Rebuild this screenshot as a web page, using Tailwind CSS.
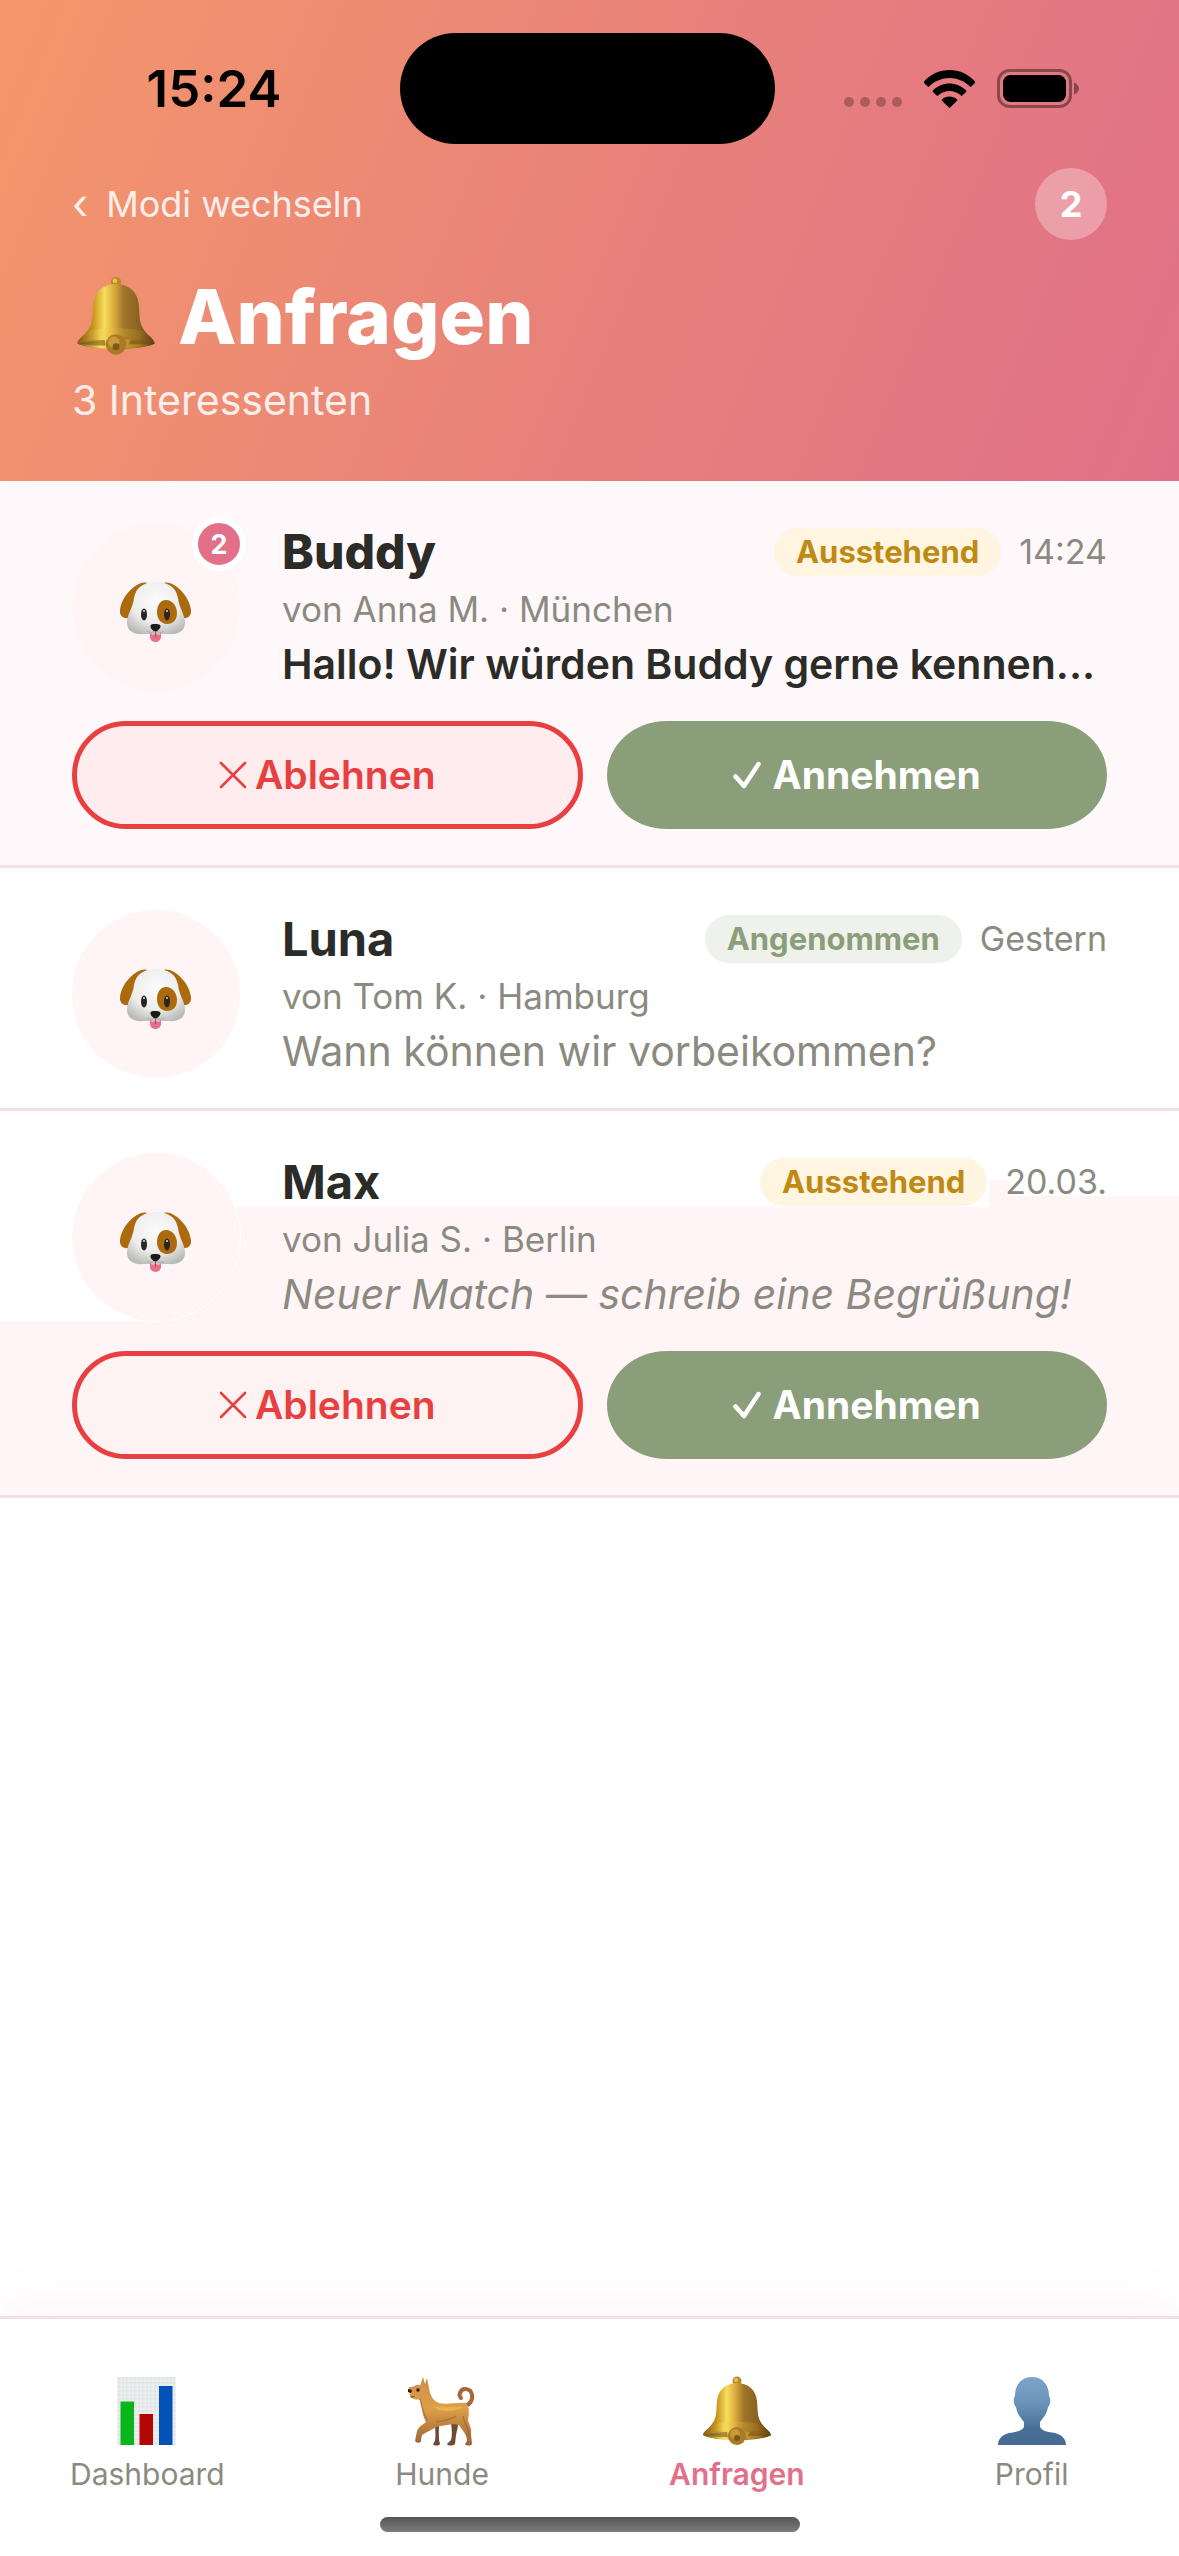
<!DOCTYPE html>
<html lang="de">
<head>
    <meta charset="UTF-8">
    <meta name="viewport" content="width=device-width, initial-scale=1.0">
    <title>Anfragen</title>
    <script src="https://cdn.jsdelivr.net/npm/@tailwindcss/browser@4"></script>
</head>
<body class="flex min-h-screen flex-col bg-white font-['Inter','Liberation_Sans',sans-serif] text-[#2b2b28]">

<!-- Symbole -->
<svg class="absolute size-0" aria-hidden="true">
    <defs>
        <linearGradient id="gold" x1="0" x2="1" y1="0" y2="0">
            <stop offset="0" stop-color="#8a5c12"/>
            <stop offset=".2" stop-color="#c8931c"/>
            <stop offset=".35" stop-color="#f7de5c"/>
            <stop offset=".48" stop-color="#d9a83a"/>
            <stop offset=".6" stop-color="#a0752c"/>
            <stop offset=".78" stop-color="#8b6420"/>
            <stop offset="1" stop-color="#6b4a14"/>
        </linearGradient>
        <linearGradient id="rim" x1="0" x2="1" y1="0" y2="0">
            <stop offset="0" stop-color="#7a5210"/>
            <stop offset=".3" stop-color="#f9e060"/>
            <stop offset=".5" stop-color="#dcab35"/>
            <stop offset=".8" stop-color="#a87a22"/>
            <stop offset="1" stop-color="#4f360e"/>
        </linearGradient>
        <radialGradient id="fur" cx=".5" cy=".35" r=".7">
            <stop offset="0" stop-color="#fbfbfb"/>
            <stop offset=".6" stop-color="#ededed"/>
            <stop offset="1" stop-color="#b9bab6"/>
        </radialGradient>
        <linearGradient id="coat" x1="0" x2="0" y1="0" y2="1">
            <stop offset="0" stop-color="#cd8c4c"/>
            <stop offset=".45" stop-color="#dda048"/>
            <stop offset="1" stop-color="#9c6236"/>
        </linearGradient>
        <linearGradient id="person" x1="0" x2="0" y1="0" y2="1">
            <stop offset="0" stop-color="#7ea5c8"/>
            <stop offset=".4" stop-color="#6a92b8"/>
            <stop offset=".75" stop-color="#4a7098"/>
            <stop offset="1" stop-color="#466a90"/>
        </linearGradient>
    </defs>

    <symbol id="bell" viewBox="0 0 72 72">
        <circle cx="36" cy="6" r="4.5" fill="#b98a25"/>
        <circle cx="35" cy="5" r="2" fill="#e8c64a"/>
        <path d="M36 8c10 0 19 6 20 18 1 11 0 16 5 23 4 5 9 8 9 11-3 3-19 5-34 5S5 63 2 60c0-3 5-6 9-11 5-7 4-12 5-23C17 14 26 8 36 8z" fill="url(#gold)"/>
        <path d="M13 49c12-3 34-3 46 0 4 4 8 6 10 9-14-3-52-3-66 0 2-3 6-5 10-9z" fill="url(#rim)" opacity=".5"/>
        <path d="M2 60c14-5 54-5 68 0-10 6-58 6-68 0z" fill="url(#rim)"/>
        <path d="M4 60c6-2 14-3 22-3l1 5c-9 0-17 0-23-2zM68 60c-6-2-12-3-19-3l-2 4c8 0 15 0 21-1z" fill="#6d4a10" opacity=".55"/>
        <circle cx="36" cy="61" r="9" fill="#a97b28"/>
        <circle cx="34" cy="59" r="5" fill="#c9993a"/>
        <circle cx="36" cy="63" r="3" fill="#7d5818"/>
    </symbol>

    <symbol id="dog-face" viewBox="0 -10 72 72">
        <path d="M27 2C19-1 2 13 0 29c-1 9 8 10 13 6 5-8 5-22 14-33zM44 2c8-3 25 11 27 27 1 9-8 10-13 6-5-8-5-22-14-33z" fill="#ad6a0d"/>
        <path d="M12 32c2-7 2-13 6-21M59 32c-2-7-2-13-6-21" fill="none" stroke="#7f4b08" stroke-width="2" opacity=".5"/>
        <path d="M36 1c12 0 20 5 22 16 1 10 7 16 7 25 0 8-7 12-17 11H24C14 54 7 50 7 42c0-9 6-15 7-25C16 6 24 1 36 1z" fill="url(#fur)"/>
        <path d="M46 19c7 0 11 7 11 13 0 7-4 11-10 11s-10-5-10-12c0-6 3-12 9-12z" fill="#ad6a0d"/>
        <ellipse cx="24" cy="33.500" rx="3" ry="6" fill="#2a2522"/>
        <ellipse cx="47" cy="33.500" rx="3" ry="6" fill="#2a2522"/>
        <circle cx="24" cy="30" r="1" fill="#ddd"/>
        <circle cx="47" cy="30" r="1" fill="#ddd"/>
        <path d="M30 52c2 2 4 2 5.500 0 2 2 4 2 5.500 0v4c0 3-3 5-5.500 5s-5.500-2-5.500-5z" fill="#e6708a"/>
        <path d="M27 50c3 2 6 2 8.500-1 3 3 6 3 8.500 1" fill="none" stroke="#a8a8a4"/>
        <path d="M35.500 43c4 0 5 1 5 2.500s-3 5-5 5-5-3-5-5 1-2.500 5-2.500z" fill="#1d1a19"/>
        <path d="M35.500 50v6" stroke="#b04a62"/>
    </symbol>

    <symbol id="chart" viewBox="0 0 72 72">
        <path d="M6.500 2h58v68h-58z" fill="#dfe4e5"/>
        <path d="M10 2v68M14 2v68M18 2v68M22 2v68M26 2v68M30 2v68M34 2v68M38 2v68M42 2v68M46 2v68M50 2v68M54 2v68M58 2v68M62 2v68M7 6h57M7 10h57M7 14h57M7 18h57M7 22h57M7 26h57M7 30h57M7 34h57M7 38h57M7 42h57M7 46h57M7 50h57M7 54h57M7 58h57M7 62h57M7 66h57" stroke="#eff2f2"/>
        <path d="M9.500 26.500h13.500V70H9.500z" fill="#08b61c"/>
        <path d="M28.500 39H42v31H28.500z" fill="#b50606"/>
        <path d="M48 11h13.500v59H48z" fill="#0352b8"/>
    </symbol>

    <symbol id="dog" viewBox="0 0 72 72">
        <path d="M29 46l5 1c-2 6-1 12-1 18l1 4c-1 2-6 2-7 0l2-3c1-6 0-12 0-20zM45 44l8 1c-1 7-2 10-3 15l-1 9c-2 2-7 2-8 0l4-4c2-7 0-13 0-21z" fill="#6f4a34"/>
        <path d="M58 31c6-1 9-6 8-11-1-7-10-8-12-2-1 2 0 4 1 5" fill="none" stroke="#a9663c" stroke-width="4" stroke-linecap="round"/>
        <path d="M14 11l3-9 2 7 2-6 2 10c1 7 4 13 10 15 8 2 18-1 27 0 4 4 3 12 2 17 1 5 4 8 3 14l1 10c-1 2-6 2-7 0l2-3c0-7-5-11-8-16-7-2-13 1-20 1-5 2-12 6-17 9l-1 5c1 3-4 4-6 1l2-10c2-5 6-6 9-9-4-7-4-15-6-22-2-1-4 0-6-1-3-1-5-3-4-5l-2-3 1-4c4 1 7-3 11-2z" fill="url(#coat)"/>
        <path d="M27 31c8 3 22 0 30 1-4 4-24 7-30-1z" fill="#efbb52" opacity=".7"/>
        <path d="M14 24c2 8 3 14 7 21M30 47c8-1 14-2 20-6M57 41c1 8 6 12 6 20" fill="none" stroke="#8d5632" stroke-width="1.500" opacity=".5"/>
        <circle cx="12" cy="15" r="1.700" fill="#2b1b14"/>
        <path d="M2 14l4 1-1 3-3-1zM4 22c2 1 4 0 5-1" fill="#2b1b14"/>
    </symbol>

    <symbol id="profile" viewBox="0 0 72 72">
        <path d="M36 2c11 0 17 8 17 19l1 2c1 5-1 8-2 9-1 7-5 11-8 15v5c2 4 8 5 15 6 8 2 11 7 11 12H2c0-5 3-10 11-12 7-1 13-2 15-6v-5c-3-4-7-8-8-15-1-1-3-4-2-9l1-2C19 10 25 2 36 2z" fill="url(#person)"/>
    </symbol>

    <symbol id="cross" viewBox="0 0 28 28">
        <path d="M2 2l24 24M26 2L2 26" fill="none" stroke="currentColor" stroke-width="2.600" stroke-linecap="round"/>
    </symbol>

    <symbol id="check" viewBox="0 0 28 28">
        <path d="M2.500 15.500l8.500 9.500L25.500 3" fill="none" stroke="currentColor" stroke-width="4.500" stroke-linecap="round" stroke-linejoin="round"/>
    </symbol>
</svg>

<!-- Kopfbereich -->
<header class="bg-[linear-gradient(112deg,#f4976b_0%,#e8827a_50%,#e07088_100%)] pt-[33px] pb-[54px] text-white">
    <div class="flex items-center">
        <div class="flex flex-1 justify-center pl-7 text-[51px] leading-[60px] font-semibold text-black">15:24</div>
        <div class="h-[111px] w-[375px] rounded-full bg-black"></div>
        <div class="flex flex-1 items-center justify-center gap-[22px] pr-8 text-black">
            <svg class="h-[38px] w-[58px]" viewBox="0 0 58 38" aria-hidden="true">
                <g fill="currentColor" opacity=".25">
                    <circle cx="5" cy="32" r="5"/>
                    <circle cx="21" cy="32" r="5"/>
                    <circle cx="37" cy="32" r="5"/>
                    <circle cx="53" cy="32" r="5"/>
                </g>
            </svg>
            <svg class="h-[38px] w-[51px]" viewBox="0 0 51 38" aria-hidden="true">
                <path d="M0 11.500C14-3.800 37-3.800 51 11.500c.4.500.4 1 0 1.400l-3.700 3.700c-.4.400-1 .4-1.400 0C34.500 5.200 16.500 5.200 5.100 16.600c-.4.400-1 .4-1.400 0L0 12.900c-.3-.4-.3-1 0-1.400z"/>
                <path d="M8.900 20.500c9.300-9.300 23.900-9.300 33.200 0 .4.400.4 1 0 1.400l-3.800 3.700c-.4.400-1 .4-1.400 0-6.400-6-16.400-6-22.800 0-.4.400-1 .4-1.400 0l-3.800-3.700c-.4-.4-.4-1 0-1.400z"/>
                <path d="M18 29.400c4.300-3.800 10.700-3.800 15 0 .5.400.5 1 .1 1.400l-6.900 6.700c-.4.400-1 .4-1.400 0l-6.900-6.700c-.4-.4-.4-1 .1-1.400z"/>
            </svg>
            <svg class="h-[39px] w-[82px]" viewBox="0 0 82 39" aria-hidden="true">
                <rect x="1.500" y="1.500" width="72" height="36" rx="11" fill="none" stroke="currentColor" stroke-width="3" opacity=".4"/>
                <path d="M77 13.500c3 1 5 3.500 5 6s-2 5-5 6z" opacity=".4"/>
                <rect x="6" y="6" width="63" height="27" rx="7.500"/>
            </svg>
        </div>
    </div>

    <div class="mt-6 flex items-center justify-between px-[72px]">
        <a href="#" class="flex items-center gap-[18px] text-[36px] leading-[48px] text-white/85">
            <span class="text-[42px]">‹</span>
            <span>Modi wechseln</span>
        </a>
        <span class="flex size-[72px] items-center justify-center rounded-full bg-white/30 text-[36px] leading-[48px] font-bold">2</span>
    </div>

    <div class="mt-7 px-[72px]">
        <h1 class="flex items-center gap-[21px] pl-[3px] text-[76px] leading-[96px] font-extrabold">
            <svg class="size-[82px]" aria-hidden="true"><use href="#bell"/></svg>
            Anfragen
        </h1>
        <p class="mt-[9px] text-[41px] leading-[54px] text-white/85">3 Interessenten</p>
    </div>
</header>

<main class="flex-1">
    <ul>
        <li class="border-b-3 border-[#f2e0e6] bg-[#fff8fa] px-[72px] pt-[42px] pb-9">
            <div class="flex gap-[42px]">
                <div class="relative flex size-[168px] shrink-0 items-center justify-center rounded-full bg-[#fff5f6]">
                    <svg class="size-[72px]" aria-hidden="true"><use href="#dog-face"/></svg>
                    <span class="absolute -top-1.5 -right-1.5 flex size-[54px] items-center justify-center rounded-full border-6 border-white bg-[#e27088] text-[27px] leading-none font-bold text-white">2</span>
                </div>
                <div class="min-w-0 flex-1">
                    <div class="flex h-[58px] items-center justify-between">
                        <h2 class="text-[48px] leading-[58px] font-extrabold">Buddy</h2>
                        <div class="flex items-center gap-[18px]">
                            <span class="rounded-full bg-[#fff5e0] px-[22px] text-[31px] leading-[48px] font-bold text-[#bf8a14]">Ausstehend</span>
                            <time class="text-[34px] leading-[48px] text-[#8a8a80]">14:24</time>
                        </div>
                    </div>
                    <p class="text-[35px] leading-[56px] text-[#8a8a80]">von Anna M. · München</p>
                    <p class="text-[41px] leading-[54px] font-semibold whitespace-nowrap">Hallo! Wir würden Buddy gerne kennen...</p>
                </div>
            </div>
            <div class="mt-[30px] flex gap-6">
                <button type="button" class="flex h-[108px] flex-1 items-center justify-center gap-2 rounded-full border-5 border-[#e84040] bg-[#feecee] text-[39px] font-semibold text-[#e84040]">
                    <svg class="size-7" aria-hidden="true"><use href="#cross"/></svg>
                    Ablehnen
                </button>
                <button type="button" class="flex h-[108px] flex-1 items-center justify-center gap-3 rounded-[60px/54px] bg-[#8b9e7a] text-[39px] font-bold text-white">
                    <svg class="size-7" aria-hidden="true"><use href="#check"/></svg>
                    Annehmen
                </button>
            </div>
        </li>

        <li class="border-b-3 border-[#f2e0e6] px-[72px] pt-[42px] pb-[30px]">
            <div class="flex gap-[42px]">
                <div class="flex size-[168px] shrink-0 items-center justify-center rounded-full bg-[#fff5f6]">
                    <svg class="size-[72px]" aria-hidden="true"><use href="#dog-face"/></svg>
                </div>
                <div class="min-w-0 flex-1">
                    <div class="flex h-[58px] items-center justify-between">
                        <h2 class="text-[47px] leading-[58px] font-bold">Luna</h2>
                        <div class="flex items-center gap-[18px]">
                            <span class="rounded-full bg-[#eff1ec] px-[22px] text-[31px] leading-[48px] font-bold text-[#8b9e7a]">Angenommen</span>
                            <time class="text-[34px] leading-[48px] text-[#8a8a80]">Gestern</time>
                        </div>
                    </div>
                    <p class="text-[35px] leading-[56px] text-[#8a8a80]">von Tom K. · Hamburg</p>
                    <p class="text-[41px] leading-[54px] whitespace-nowrap text-[#8a8a80]">Wann können wir vorbeikommen?</p>
                </div>
            </div>
        </li>

        <li class="relative isolate border-b-3 border-[#f2e0e6] px-[72px] pt-[42px] pb-9">
            <!-- gestufte Hintergrundfläche -->
            <div class="absolute inset-0 -z-10 bg-[#fff5f6] [clip-path:polygon(0_210px,170px_210px,236px_150px,236px_96px,calc(100%-190px)_96px,calc(100%-190px)_69px,calc(100%-170px)_69px,calc(100%-170px)_85px,100%_85px,100%_100%,0_100%)]"></div>
            <div class="flex gap-[42px]">
                <div class="flex size-[168px] shrink-0 items-center justify-center rounded-full bg-[#fff5f6] ring-1 ring-white">
                    <svg class="size-[72px]" aria-hidden="true"><use href="#dog-face"/></svg>
                </div>
                <div class="min-w-0 flex-1">
                    <div class="flex h-[58px] items-center justify-between">
                        <h2 class="text-[47px] leading-[58px] font-bold">Max</h2>
                        <div class="flex items-center gap-[18px]">
                            <span class="rounded-full bg-[#fff5e0] px-[22px] text-[31px] leading-[48px] font-bold text-[#bf8a14]">Ausstehend</span>
                            <time class="text-[34px] leading-[48px] text-[#8a8a80]">20.03.</time>
                        </div>
                    </div>
                    <p class="text-[35px] leading-[56px] text-[#8a8a80]">von Julia S. · Berlin</p>
                    <p class="text-[41px] leading-[54px] whitespace-nowrap text-[#8a8a80] italic">Neuer Match — schreib eine Begrüßung!</p>
                </div>
            </div>
            <div class="mt-[30px] flex gap-6">
                <button type="button" class="flex h-[108px] flex-1 items-center justify-center gap-2 rounded-full border-5 border-[#e84040] bg-[#fef3f2] text-[39px] font-semibold text-[#e84040]">
                    <svg class="size-7" aria-hidden="true"><use href="#cross"/></svg>
                    Ablehnen
                </button>
                <button type="button" class="flex h-[108px] flex-1 items-center justify-center gap-3 rounded-[60px/54px] bg-[#8b9e7a] text-[39px] font-bold text-white">
                    <svg class="size-7" aria-hidden="true"><use href="#check"/></svg>
                    Annehmen
                </button>
            </div>
        </li>
    </ul>
</main>

<!-- Tab-Leiste -->
<nav class="border-t-3 border-[#f2e0e6] bg-white pt-14 pb-6 shadow-[0_-12px_48px_rgba(226,112,136,0.07)]">
    <div class="grid grid-cols-4 text-[30px] leading-9 text-[#8a8a80]">
        <a href="#" class="flex flex-col items-center gap-[9px]">
            <svg class="size-[72px]" aria-hidden="true"><use href="#chart"/></svg>
            Dashboard
        </a>
        <a href="#" class="flex flex-col items-center gap-[9px]">
            <svg class="size-[72px]" aria-hidden="true"><use href="#dog"/></svg>
            Hunde
        </a>
        <a href="#" class="flex flex-col items-center gap-[9px] font-semibold text-[#e27088]">
            <svg class="size-[72px]" aria-hidden="true"><use href="#bell"/></svg>
            Anfragen
        </a>
        <a href="#" class="flex flex-col items-center gap-[9px]">
            <svg class="size-[72px]" aria-hidden="true"><use href="#profile"/></svg>
            Profil
        </a>
    </div>
    <div class="mx-auto mt-[25px] h-[15px] w-[420px] rounded-full bg-linear-to-b from-[#555553] to-[#7c7c7a]"></div>
</nav>

</body>
</html>
